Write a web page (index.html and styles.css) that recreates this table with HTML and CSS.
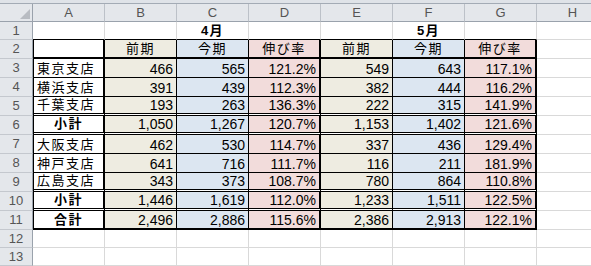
FILE: index.html
```
<!DOCTYPE html>
<html lang="ja">
<head>
<meta charset="utf-8">
<title>支店別売上</title>
<link rel="stylesheet" href="styles.css">
</head>
<body>
<div class="topbar"></div>
<div class="sheet">
  <div class="row">
    <div class="cell corner"><span class="tri"></span></div>
    <div class="cell colhead">A</div><div class="cell colhead">B</div><div class="cell colhead">C</div><div class="cell colhead">D</div><div class="cell colhead">E</div><div class="cell colhead">F</div><div class="cell colhead">G</div><div class="cell colhead">H</div>
  </div>
  <div class="row r-top">
    <div class="cell rowhead">1</div>
    <div class="cell t"></div><div class="cell t"></div><div class="cell t ctr bold">4月</div><div class="cell t"></div><div class="cell t"></div><div class="cell t ctr bold">5月</div><div class="cell t"></div><div class="cell"></div>
  </div>
  <div class="row r-thick">
    <div class="cell rowhead">2</div>
    <div class="cell t ca"></div><div class="cell t be ctr cr1">前期</div><div class="cell t bl ctr cr1">今期</div><div class="cell t pk ctr cr2">伸び率</div><div class="cell t be ctr cr1">前期</div><div class="cell t bl ctr cr1">今期</div><div class="cell t pk ctr cr2">伸び率</div><div class="cell"></div>
  </div>
  <div class="row r-thin">
    <div class="cell rowhead">3</div>
    <div class="cell t ca">東京支店</div><div class="cell t be num cr1">466</div><div class="cell t bl num cr1">565</div><div class="cell t pk num cr2">121.2%</div><div class="cell t be num cr1">549</div><div class="cell t bl num cr1">643</div><div class="cell t pk num cr2">117.1%</div><div class="cell"></div>
  </div>
  <div class="row r-thin">
    <div class="cell rowhead">4</div>
    <div class="cell t ca">横浜支店</div><div class="cell t be num cr1">391</div><div class="cell t bl num cr1">439</div><div class="cell t pk num cr2">112.3%</div><div class="cell t be num cr1">382</div><div class="cell t bl num cr1">444</div><div class="cell t pk num cr2">116.2%</div><div class="cell"></div>
  </div>
  <div class="row r-dbl">
    <div class="cell rowhead">5</div>
    <div class="cell t ca">千葉支店</div><div class="cell t be num cr1">193</div><div class="cell t bl num cr1">263</div><div class="cell t pk num cr2">136.3%</div><div class="cell t be num cr1">222</div><div class="cell t bl num cr1">315</div><div class="cell t pk num cr2">141.9%</div><div class="cell"></div>
  </div>
  <div class="row r-dbl">
    <div class="cell rowhead">6</div>
    <div class="cell t ca ctr bold">小計</div><div class="cell t be num cr1">1,050</div><div class="cell t bl num cr1">1,267</div><div class="cell t pk num cr2">120.7%</div><div class="cell t be num cr1">1,153</div><div class="cell t bl num cr1">1,402</div><div class="cell t pk num cr2">121.6%</div><div class="cell"></div>
  </div>
  <div class="row r-thin">
    <div class="cell rowhead">7</div>
    <div class="cell t ca">大阪支店</div><div class="cell t be num cr1">462</div><div class="cell t bl num cr1">530</div><div class="cell t pk num cr2">114.7%</div><div class="cell t be num cr1">337</div><div class="cell t bl num cr1">436</div><div class="cell t pk num cr2">129.4%</div><div class="cell"></div>
  </div>
  <div class="row r-thin">
    <div class="cell rowhead">8</div>
    <div class="cell t ca">神戸支店</div><div class="cell t be num cr1">641</div><div class="cell t bl num cr1">716</div><div class="cell t pk num cr2">111.7%</div><div class="cell t be num cr1">116</div><div class="cell t bl num cr1">211</div><div class="cell t pk num cr2">181.9%</div><div class="cell"></div>
  </div>
  <div class="row r-dbl">
    <div class="cell rowhead">9</div>
    <div class="cell t ca">広島支店</div><div class="cell t be num cr1">343</div><div class="cell t bl num cr1">373</div><div class="cell t pk num cr2">108.7%</div><div class="cell t be num cr1">780</div><div class="cell t bl num cr1">864</div><div class="cell t pk num cr2">110.8%</div><div class="cell"></div>
  </div>
  <div class="row r-dbl">
    <div class="cell rowhead">10</div>
    <div class="cell t ca ctr bold">小計</div><div class="cell t be num cr1">1,446</div><div class="cell t bl num cr1">1,619</div><div class="cell t pk num cr2">112.0%</div><div class="cell t be num cr1">1,233</div><div class="cell t bl num cr1">1,511</div><div class="cell t pk num cr2">122.5%</div><div class="cell"></div>
  </div>
  <div class="row r-thick">
    <div class="cell rowhead">11</div>
    <div class="cell t ca ctr bold">合計</div><div class="cell t be num cr1">2,496</div><div class="cell t bl num cr1">2,886</div><div class="cell t pk num cr2">115.6%</div><div class="cell t be num cr1">2,386</div><div class="cell t bl num cr1">2,913</div><div class="cell t pk num cr2">122.1%</div><div class="cell"></div>
  </div>
  <div class="row">
    <div class="cell rowhead">12</div>
    <div class="cell"></div><div class="cell"></div><div class="cell"></div><div class="cell"></div><div class="cell"></div><div class="cell"></div><div class="cell"></div><div class="cell"></div>
  </div>
  <div class="row">
    <div class="cell rowhead">13</div>
    <div class="cell"></div><div class="cell"></div><div class="cell"></div><div class="cell"></div><div class="cell"></div><div class="cell"></div><div class="cell"></div><div class="cell"></div>
  </div>
</div>
</body>
</html>
```
FILE: styles.css
```
* { box-sizing: border-box; }
html, body { margin: 0; padding: 0; }
body {
  width: 591px;
  height: 266px;
  overflow: hidden;
  background: #fff;
  font-family: "Liberation Sans", "Noto Sans CJK JP", sans-serif;
  color: #000;
}
.topbar {
  height: 4px;
  background: #dfe3e8;
  border-bottom: 1px solid #a3abb5;
}
.sheet {
  display: grid;
  grid-template-columns: 33px repeat(8, 72px);
  grid-template-rows: 18px 18px repeat(10, 19px) 18px 18px;
  width: 609px;
}
.row { display: contents; }
.cell {
  display: flex;
  align-items: flex-end;
  min-width: 0;
  padding: 0 3px 0 3px;
  border-right: 1px solid #d9d9d9;
  border-bottom: 1px solid #d9d9d9;
  background-clip: padding-box;
  font-size: 13px;
  letter-spacing: 1.5px;
  line-height: 16px;
  white-space: nowrap;
}
.corner {
  position: relative;
  background: #e4e7eb;
  border-right: 1px solid #9aa2ac;
  border-bottom: 1px solid #9aa2ac;
}
.tri {
  position: absolute;
  right: 2px;
  bottom: 2px;
  width: 0;
  height: 0;
  border-left: 10px solid transparent;
  border-bottom: 10px solid #b8bcc2;
}
.colhead {
  justify-content: center;
  align-items: center;
  padding: 0;
  background: #e4e7eb;
  border-right: 1px solid #bcc1c8;
  border-bottom: 1px solid #9aa2ac;
  color: #555;
  font-size: 13px;
  letter-spacing: 0;
}
.rowhead {
  justify-content: center;
  align-items: center;
  padding: 0;
  background: #e4e7eb;
  border-right: 1px solid #9aa2ac;
  border-bottom: 1px solid #c4c8ce;
  color: #555;
  font-size: 13px;
  letter-spacing: 0;
}
.ctr { justify-content: center; }
.num {
  justify-content: flex-end;
  font-size: 14px;
  letter-spacing: 0;
}
.bold { font-weight: 700; }
.be { background-color: #eeece1; }
.bl { background-color: #dce6f1; }
.pk { background-color: #f2dcdb; }

.r-top > .t { border-bottom: 1px solid #000; }
.r-thick > .t { border-bottom: 2px solid #000; }
.r-thin > .t { border-bottom: 1px solid #000; }
.r-dbl > .t { border-bottom: 3px double #000; }
.ca { border-left: 1px solid #000; border-right: 2px solid #000; }
.cr1 { border-right: 1px solid #000; }
.cr2 { border-right: 2px solid #000; }
```
